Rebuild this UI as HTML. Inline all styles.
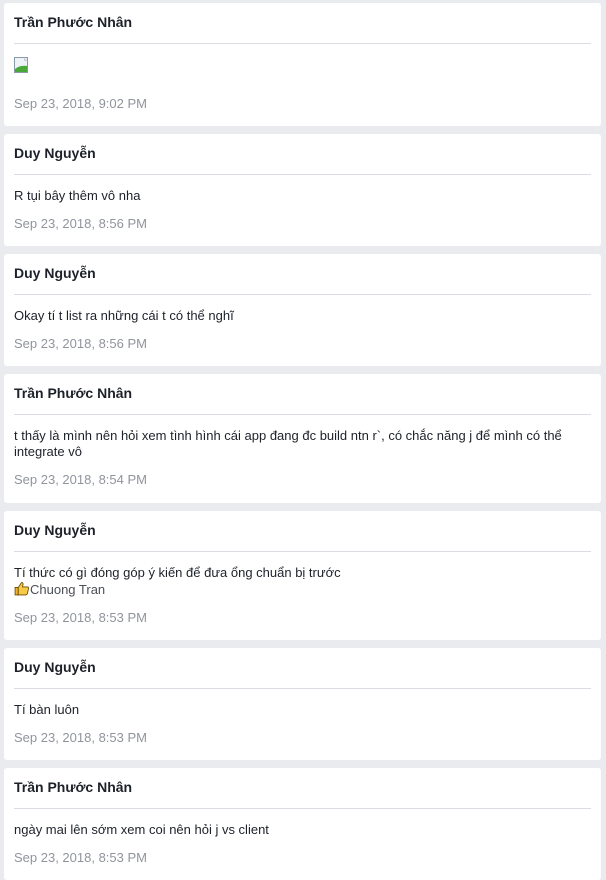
<!DOCTYPE html>
<html><head><meta charset="utf-8">
<style>
*{box-sizing:border-box;margin:0;padding:0}
html,body{width:606px;height:873px;overflow:hidden;background:#e9ebee;font-family:"Liberation Sans",Arial,sans-serif}
.c{position:absolute;left:4px;width:597px;background:#fff;border-radius:3px;padding:0 10px}
.h{height:41px;line-height:38px;font-size:14px;font-weight:bold;color:#1d2129;border-bottom:1px solid #dadde1}
.t{margin-top:13px;font-size:13px;line-height:16px;color:#1d2129}
.d{margin-top:12px;font-size:13px;line-height:16px;color:#90949c}
.img{margin-top:13px;height:16px}
.n{color:#4b4f56}
</style></head><body>

<div class="c" style="top:3px;height:123px">
<div class="h">Trần Phước Nhân</div>
<div class="img"><svg width="16" height="16" viewBox="0 0 16 16"><rect x="0.5" y="0.5" width="13" height="15" fill="#eef3f8" stroke="#8a99a8"/><path d="M1 15 L1 12 Q6 8 13 9 L13 15Z" fill="#4aa83a"/><path d="M10 0.5 L13.5 4 L10 4Z" fill="#ccd"/></svg></div>
<div class="d" style="margin-top:23px">Sep 23, 2018, 9:02 PM</div>
</div>

<div class="c" style="top:134px;height:112px">
<div class="h">Duy Nguyễn</div>
<div class="t">R tụi bây thêm vô nha</div>
<div class="d">Sep 23, 2018, 8:56 PM</div>
</div>

<div class="c" style="top:254px;height:112px">
<div class="h">Duy Nguyễn</div>
<div class="t">Okay tí t list ra những cái t có thể nghĩ</div>
<div class="d">Sep 23, 2018, 8:56 PM</div>
</div>

<div class="c" style="top:374px;height:129px">
<div class="h">Trần Phước Nhân</div>
<div class="t">t thấy là mình nên hỏi xem tình hình cái app đang đc build ntn r`, có chắc năng j để mình có thể<br>integrate vô</div>
<div class="d">Sep 23, 2018, 8:54 PM</div>
</div>

<div class="c" style="top:511px;height:129px">
<div class="h">Duy Nguyễn</div>
<div class="t">Tí thức có gì đóng góp ý kiến để đưa ổng chuẩn bị trước<br><span class="n"><svg width="16" height="15" viewBox="0 0 15 14" style="vertical-align:-2px"><path d="M1 6h3v7H1z" fill="#f0b429" stroke="#6b4a00" stroke-width="0.8"/><path d="M4 6 L7 1.5 Q8.5 1 8.5 3 L8 5.5 H13 Q14 6 13.5 7.5 L12.5 12 Q12 13 11 13 H4Z" fill="#f7c948" stroke="#6b4a00" stroke-width="0.8"/></svg>Chuong Tran</span></div>
<div class="d">Sep 23, 2018, 8:53 PM</div>
</div>

<div class="c" style="top:648px;height:112px">
<div class="h">Duy Nguyễn</div>
<div class="t">Tí bàn luôn</div>
<div class="d">Sep 23, 2018, 8:53 PM</div>
</div>

<div class="c" style="top:768px;height:112px">
<div class="h">Trần Phước Nhân</div>
<div class="t">ngày mai lên sớm xem coi nên hỏi j vs client</div>
<div class="d">Sep 23, 2018, 8:53 PM</div>
</div>

</body></html>
